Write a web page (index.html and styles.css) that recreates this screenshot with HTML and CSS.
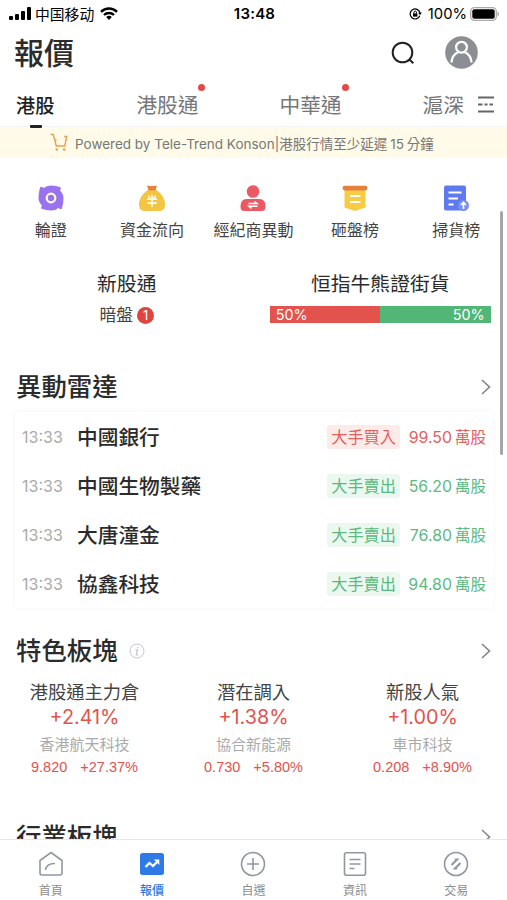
FILE: index.html
```
<!DOCTYPE html>
<html lang="zh-Hant">
<head>
  <meta charset="UTF-8">
  <title>報價</title>
  <meta name="viewport" content="width=device-width, initial-scale=1.0">
  <link rel="stylesheet" href="styles.css">
</head>
<body>
  <div class="app">
    <div class="status-bar">
      <div class="status-left">
        <svg width="22" height="14" viewBox="0 0 22 14">
          <rect x="0" y="9" width="4" height="4" rx="1"/>
          <rect x="6" y="7" width="4" height="6" rx="1"/>
          <rect x="12" y="4" width="4" height="9" rx="1"/>
          <rect x="18" y="0" width="4" height="13" rx="1"/>
        </svg>
        <span class="carrier">中国移动</span>
        <svg width="18" height="13" viewBox="0 0 18 13" fill="none" stroke="#000" stroke-width="2.4">
          <path d="M1 4.8a11.5 11.5 0 0 1 16 0"/>
          <path d="M4 8a7.2 7.2 0 0 1 10 0"/>
          <path d="M9 13L6.2 10.1a4 4 0 0 1 5.6 0z" fill="#000" stroke="none"/>
        </svg>
      </div>
      <div class="status-time">13:48</div>
      <div class="status-right">
        <svg width="13" height="12" viewBox="0 0 13 12" fill="none" stroke="#000" stroke-width="1.2">
          <path d="M10.8 7.8A5 5 0 1 1 11 4.8"/>
          <path d="M9.2 4.6h3.6L11 7.2z" fill="#000" stroke="none"/>
          <rect x="4" y="5.4" width="4.4" height="3.2" fill="#000" stroke="none"/>
          <path d="M4.9 5.6V4.4a1.3 1.3 0 0 1 2.6 0v1.2" stroke-width="1"/>
        </svg>
        <span class="percent">100%</span>
        <svg width="30" height="14" viewBox="0 0 30 14">
          <rect x=".7" y=".7" width="25.6" height="12.6" rx="3.8" fill="none" stroke="#aaa" stroke-width="1.3"/>
          <rect x="2.3" y="2.3" width="22.4" height="9.4" rx="2"/>
          <path d="M27.5 4.5c2 .8 2 4.2 0 5z" fill="#aaa"/>
        </svg>
      </div>
    </div>

    <div class="header">
      <h1>報價</h1>
      <div class="header-actions">
        <svg width="24" height="24" viewBox="0 0 24 24" fill="none" stroke="#222" stroke-width="2">
          <circle cx="11.5" cy="11.5" r="9.8"/>
          <path d="M18.2 18.2L22.3 22.3"/>
        </svg>
        <svg width="33" height="33" viewBox="0 0 33 33" fill="none">
          <circle cx="16.5" cy="16.5" r="16.3" fill="#8b8f93"/>
          <circle cx="16.5" cy="11.2" r="5.4" stroke="#fff" stroke-width="2.2"/>
          <path d="M6.5 26.5c.3-5 2.7-8.6 6.7-10.3M26.5 26.5c-.3-5-2.7-8.6-6.7-10.3" stroke="#fff" stroke-width="2.2"/>
        </svg>
      </div>
    </div>

    <div class="tabs">
      <div class="tab active">港股</div>
      <div class="tab dot">港股通</div>
      <div class="tab dot">中華通</div>
      <div class="tab">滬深</div>
      <svg class="tabs-more" width="18" height="17" viewBox="0 0 18 17" fill="none" stroke="#666" stroke-width="1.8">
        <path d="M1 1.5h16M1 15.5h16M1 8.5h4.5M7.5 8.5h3M12.5 8.5H16"/>
      </svg>
    </div>

    <div class="notice">
      <svg width="18" height="19" viewBox="0 0 18 19" fill="none" stroke="#e8a04c" stroke-width="1.4">
        <path d="M.5 1.5h2.8l3 11.5h8.5l1.9-9.5h-2.5M4.7 7h1.8"/>
        <circle cx="6.7" cy="16.5" r="1.3" fill="#e8a04c" stroke="none"/>
        <circle cx="14.2" cy="16.5" r="1.3" fill="#e8a04c" stroke="none"/>
      </svg>
      <span>Powered by Tele-Trend Konson|港股行情至少延遲<b>15</b>分鐘</span>
    </div>

    <div class="shortcuts">
      <div class="shortcut">
        <svg width="26" height="26" viewBox="0 0 26 26" fill="#9b72ee">
          <path d="M2 2.5Q3.500 1 5.500 3 9 .3 13 .5q5 0 9.500 1.800 1 1.500-.5 3.200Q25.500 9 25.500 13q0 5-1.500 10.500-1.500 1.500-3.500-.5Q17 25.700 13 25.500q-5 0-9.500-1.800-1-1.500.5-3.200Q.5 17 .5 13 .5 8 2 2.500z"/>
          <circle cx="13" cy="13" r="4.3" stroke="#fff" stroke-width="2.2"/>
        </svg>
        <span>輪證</span>
      </div>
      <div class="shortcut">
        <svg width="26" height="26" viewBox="0 0 26 26">
          <path d="M9 5h8c5 3 9 8.5 9 14 0 5-2 7-6 7H6c-4 0-6-2-6-7C0 13.5 4 8 9 5z" fill="#f4c543"/>
          <path d="M8 .5q5 1.2 10 0L16.5 5.5h-7z" fill="#e5823f"/>
          <path d="M13 10v12M8 14.3h10M8 18h10M9.5 10.8l1.5 2.5M16.5 10.8L15 13.3" fill="none" stroke="#fff" stroke-width="1.6"/>
        </svg>
        <span>資金流向</span>
      </div>
      <div class="shortcut">
        <svg width="26" height="26" viewBox="0 0 26 26">
          <circle cx="13" cy="6.5" r="6.3" fill="#eb5a64"/>
          <path d="M6.5 14h13c4 0 6 3.5 6 7.5 0 3-1 4.5-4 4.5h-17c-3 0-4-1.500-4-4.500C.5 17.5 2.500 14 6.500 14z" fill="#eb5a64"/>
          <path d="M8.5 18.5h8.5l-2.500-2M17.500 21.300H9l2.500 2" fill="none" stroke="#fff" stroke-width="1.5"/>
        </svg>
        <span>經紀商異動</span>
      </div>
      <div class="shortcut">
        <svg width="26" height="26" viewBox="0 0 26 26">
          <path d="M2.5 3h21v19.500L13 26 2.500 22.500z" fill="#f8cb43"/>
          <rect x=".5" y=".8" width="25" height="4.6" rx="2.3" fill="#e5813e"/>
          <path d="M8 11h10.500M8 17h10.500" stroke="#fff" stroke-width="2"/>
        </svg>
        <span>砸盤榜</span>
      </div>
      <div class="shortcut">
        <svg width="26" height="26" viewBox="0 0 26 26">
          <rect x="1" y=".5" width="22" height="25" rx="2" fill="#5f79ee"/>
          <path d="M5.5 7.5h13M5.5 13.5h9.500M5.500 19.500h5" stroke="#fff" stroke-width="1.8"/>
          <circle cx="20.5" cy="20.5" r="5.5" fill="#7990f5"/>
          <path d="M20.5 24v-6M18 20l2.500-2.700L23 20" fill="none" stroke="#fff" stroke-width="1.7"/>
        </svg>
        <span>掃貨榜</span>
      </div>
    </div>

    <div class="overview">
      <div class="overview-item">
        <h3>新股通</h3>
        <div class="dark-pool">暗盤<span class="badge">1</span></div>
      </div>
      <div class="overview-item">
        <h3>恒指牛熊證街貨</h3>
        <div class="ratio">
          <div class="bear">50%</div>
          <div class="bull">50%</div>
        </div>
      </div>
    </div>

    <div class="section-head radar-head">
      <h2>異動雷達</h2>
      <svg class="arrow" width="10" height="16" viewBox="0 0 10 16"><path d="M1 1l7.500 7L1 15"/></svg>
    </div>
    <div class="radar">
      <div class="radar-row buy">
        <span class="time">13:33</span>
        <span class="name">中國銀行</span>
        <span class="tag">大手買入</span>
        <span class="amount">99.50<i>萬股</i></span>
      </div>
      <div class="radar-row sell">
        <span class="time">13:33</span>
        <span class="name">中國生物製藥</span>
        <span class="tag">大手賣出</span>
        <span class="amount">56.20<i>萬股</i></span>
      </div>
      <div class="radar-row sell">
        <span class="time">13:33</span>
        <span class="name">大唐潼金</span>
        <span class="tag">大手賣出</span>
        <span class="amount">76.80<i>萬股</i></span>
      </div>
      <div class="radar-row sell">
        <span class="time">13:33</span>
        <span class="name">協鑫科技</span>
        <span class="tag">大手賣出</span>
        <span class="amount">94.80<i>萬股</i></span>
      </div>
    </div>

    <div class="section-head plate-head">
      <h2>特色板塊</h2>
      <svg class="info" width="16" height="16" viewBox="0 0 16 16" fill="none" stroke="#c3c6ca">
        <circle cx="8" cy="8" r="7"/>
        <path d="M6.5 6.8h2L7.300 12h1.800M8.800 3.700v1.500" stroke-width="1.2"/>
      </svg>
      <svg class="arrow" width="10" height="16" viewBox="0 0 10 16"><path d="M1 1l7.500 7L1 15"/></svg>
    </div>
    <div class="plates">
      <div class="plate">
        <div class="plate-name">港股通主力倉</div>
        <div class="plate-change">+2.41%</div>
        <div class="plate-stock">香港航天科技</div>
        <div class="plate-quote"><span>9.820</span><span>+27.37%</span></div>
      </div>
      <div class="plate">
        <div class="plate-name">潛在調入</div>
        <div class="plate-change">+1.38%</div>
        <div class="plate-stock">協合新能源</div>
        <div class="plate-quote"><span>0.730</span><span>+5.80%</span></div>
      </div>
      <div class="plate">
        <div class="plate-name">新股人氣</div>
        <div class="plate-change">+1.00%</div>
        <div class="plate-stock">車市科技</div>
        <div class="plate-quote"><span>0.208</span><span>+8.90%</span></div>
      </div>
    </div>

    <div class="section-head industry-head">
      <h2>行業板塊</h2>
      <svg class="arrow" width="10" height="16" viewBox="0 0 10 16"><path d="M1 1l7.500 7L1 15"/></svg>
    </div>

    <div class="scrollbar"></div>

    <div class="tabbar">
      <div class="tabbar-item">
        <svg width="26" height="26" viewBox="0 0 26 26" fill="none" stroke="#92969f" stroke-width="1.6">
          <path d="M2 9.5L13 1.500l11 8V22q0 2-2 2H4q-2 0-2-2z"/>
          <path d="M7.5 19c.5-4 3.500-6.500 9.500-6.500"/>
        </svg>
        <span>首頁</span>
      </div>
      <div class="tabbar-item active">
        <svg width="26" height="26" viewBox="0 0 26 26">
          <rect x="1" y="2" width="24" height="22" rx="2.5" fill="#2f7be5"/>
          <path d="M6.5 16l4-4 3.500 3 5-5" fill="none" stroke="#fff" stroke-width="2.3"/>
          <path d="M14.8 8.500h5.500v5.500z" fill="#fff"/>
        </svg>
        <span>報價</span>
      </div>
      <div class="tabbar-item">
        <svg width="26" height="26" viewBox="0 0 26 26" fill="none" stroke="#92969f" stroke-width="1.6">
          <circle cx="13" cy="13" r="11.5"/>
          <path d="M7 13h12M13 7v12"/>
        </svg>
        <span>自選</span>
      </div>
      <div class="tabbar-item">
        <svg width="26" height="26" viewBox="0 0 26 26" fill="none" stroke="#92969f" stroke-width="1.6">
          <rect x="2.5" y="1.8" width="21" height="22.4" rx="2"/>
          <path d="M7.5 8.500h11M7.500 13h11M7.500 17.500h5"/>
        </svg>
        <span>資訊</span>
      </div>
      <div class="tabbar-item">
        <svg width="26" height="26" viewBox="0 0 26 26" fill="none" stroke="#92969f" stroke-width="1.6">
          <circle cx="13" cy="13" r="11.5"/>
          <path d="M8.5 14l5.500-5.500h-2M17.500 12L12 17.500h2" stroke-width="2.1"/>
        </svg>
        <span>交易</span>
      </div>
    </div>
  </div>
</body>
</html>
```
FILE: styles.css
```
* {
  margin: 0;
  padding: 0;
  box-sizing: border-box;
}
body {
  background: #fff;
  color: #2b2b2b;
  font-family: Inter, 'Noto Sans CJK TC', sans-serif;
}
svg {
  display: block;
  flex-shrink: 0;
}
.app {
  position: relative;
  width: 507px;
  height: 900px;
  overflow: hidden;
}

/* Status bar */
.status-bar {
  display: grid;
  grid-template-columns: 1fr auto 1fr;
  align-items: center;
  height: 27px;
  padding: 0 7px 0 9px;
  color: #000;
}
.status-left,
.status-right {
  display: flex;
  align-items: center;
}
.carrier {
  margin: 0 6px 0 4px;
  font-family: 'Noto Sans CJK SC', sans-serif;
  font-size: 14.8px;
  line-height: 20px;
}
.status-time {
  font-size: 15px;
  font-weight: 600;
  letter-spacing: 0.2px;
}
.status-right {
  justify-content: flex-end;
}
.percent {
  margin: 0 3px 0 6px;
  font-size: 14.8px;
}

/* Title */
.header {
  display: flex;
  align-items: center;
  justify-content: space-between;
  height: 51px;
  padding: 0 29px 0 14px;
}
.header h1 {
  font-size: 30px;
  font-weight: 500;
  line-height: 40px;
}
.header-actions {
  display: flex;
  align-items: center;
  gap: 30px;
}

/* Market tabs */
.tabs {
  display: flex;
  align-items: center;
  height: 49px;
  padding: 5px 12px 0 16px;
  border-bottom: 1px solid #f4f4f4;
}
.tab {
  position: relative;
  margin-right: 81px;
  padding-top: 2px;
  color: #777;
  font-size: 20.7px;
  line-height: 44px;
}
.tab:nth-child(4) {
  margin-right: 13px;
}
.tab.active {
  margin-right: 82px;
  color: #222;
  font-size: 19.2px;
  font-weight: 500;
}
.tab.active::after {
  content: '';
  position: absolute;
  bottom: 0;
  left: 14px;
  width: 12px;
  height: 3px;
  border-radius: 1px;
  background: #222;
}
.tab.dot::after {
  content: '';
  position: absolute;
  top: 2px;
  right: -7px;
  width: 7px;
  height: 7px;
  border-radius: 50%;
  background: #e04b48;
}

.notice {
  display: flex;
  align-items: center;
  gap: 7px;
  height: 31px;
  padding-left: 50px;
  background: #fffbe8;
  color: #777;
  font-size: 13.5px;
  white-space: nowrap;
}
.notice b {
  padding: 0 3px;
  font-weight: 400;
}

/* Shortcuts */
.shortcuts {
  display: grid;
  grid-template-columns: repeat(5, 1fr);
  height: 111px;
  padding-top: 27px;
}
.shortcut {
  display: flex;
  flex-direction: column;
  align-items: center;
  gap: 7px;
  color: #444;
  font-size: 16px;
  line-height: 24px;
}

.overview {
  display: grid;
  grid-template-columns: 1fr 1fr;
  height: 93px;
}
.overview-item {
  display: flex;
  flex-direction: column;
  align-items: center;
}
.overview h3 {
  margin-top: 1px;
  font-size: 19.8px;
  font-weight: 400;
  line-height: 28px;
}
.dark-pool {
  display: flex;
  align-items: center;
  gap: 4px;
  margin-top: 5px;
  color: #444;
  font-size: 16.8px;
  line-height: 24px;
}
.badge {
  width: 17px;
  height: 17px;
  border-radius: 50%;
  background: #e04440;
  color: #fff;
  font-size: 13px;
  line-height: 17px;
  text-align: center;
}
.ratio {
  display: flex;
  width: 221px;
  margin-top: 8px;
  color: #fff;
  font-size: 14.4px;
  line-height: 17px;
}
.bear,
.bull {
  flex: 1;
  padding: 0 6px;
  background: #e3524d;
}
.bull {
  background: #52b676;
  text-align: right;
}

/* Section titles */
.section-head {
  display: flex;
  align-items: center;
  padding: 0 16px;
}
.section-head h2 {
  font-size: 25.4px;
  font-weight: 500;
  line-height: 36px;
}
.arrow {
  margin-left: auto;
  fill: none;
  stroke: #888;
  stroke-width: 1.7;
}
.info {
  margin-left: 11px;
}
.radar-head {
  height: 50px;
}

/* Radar list */
.radar {
  height: 196px;
  margin: 0 14px 0 15px;
  box-shadow: 0 0 5px rgba(0, 0, 0, 0.05);
}
.radar-row {
  display: flex;
  align-items: center;
  height: 49px;
  padding: 0 7px;
}
.time {
  width: 55px;
  color: #aaa;
  font-size: 16px;
}
.name {
  padding-bottom: 1px;
  font-size: 20.7px;
  font-weight: 500;
}
.tag {
  margin-left: auto;
  padding: 0 4px;
  border-radius: 3px;
  font-size: 16.2px;
  line-height: 24px;
}
.amount {
  width: 78px;
  margin-left: 8px;
  padding-bottom: 1px;
  font-size: 15.9px;
  text-align: right;
  white-space: nowrap;
}
.amount i {
  margin-left: 3px;
  font-size: 15.5px;
  font-style: normal;
}
.buy .tag,
.buy .amount {
  color: #e3605c;
}
.buy .tag {
  background: #fdebea;
}
.sell .tag,
.sell .amount {
  color: #5cba80;
}
.sell .tag {
  background: #eaf8ef;
}

/* Plates */
.plate-head {
  height: 52px;
  margin-top: 17px;
}
.plates {
  display: grid;
  grid-template-columns: repeat(3, 1fr);
  height: 134px;
  padding-top: 1px;
  text-align: center;
}
.plate-name {
  color: #444;
  font-size: 18.3px;
  line-height: 28px;
}
.plate-change {
  color: #e3524d;
  font-size: 19.8px;
  line-height: 23px;
}
.plate-stock {
  margin-top: 4px;
  color: #aaa;
  font-size: 15px;
  line-height: 24px;
}
.plate-quote {
  display: flex;
  justify-content: center;
  gap: 13px;
  color: #e3524d;
  font-family: 'Liberation Sans', sans-serif;
  font-size: 14.5px;
  line-height: 20px;
}
.industry-head {
  height: 52px;
}

.scrollbar {
  position: absolute;
  top: 211px;
  right: 4px;
  width: 3px;
  height: 244px;
  border-radius: 2px;
  background: #a5a5a5;
}

/* Bottom navigation */
.tabbar {
  position: absolute;
  bottom: 0;
  left: 0;
  display: grid;
  grid-template-columns: repeat(5, 1fr);
  width: 100%;
  height: 61px;
  padding-top: 11px;
  border-top: 1px solid #e8e8e8;
  background: #fff;
}
.tabbar-item {
  display: flex;
  flex-direction: column;
  align-items: center;
  gap: 5px;
  color: #8d8d8d;
  font-size: 12px;
  line-height: 18px;
}
.tabbar-item.active {
  color: #2f7be5;
  font-weight: 500;
}
```
